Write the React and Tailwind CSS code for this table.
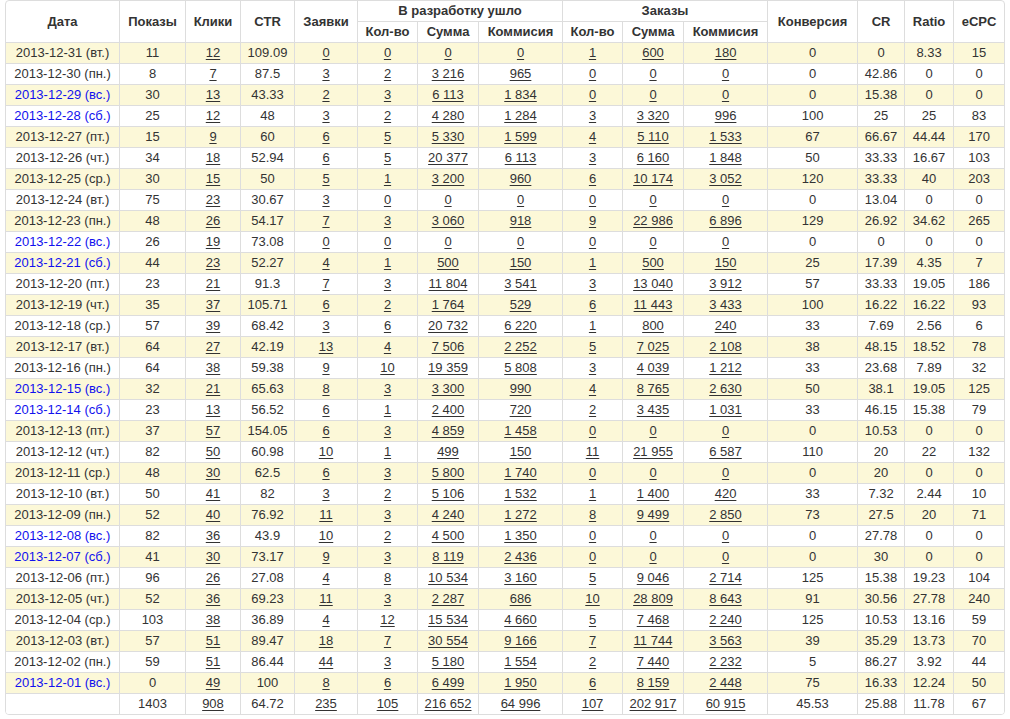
import React from "react";

const raw = `2013-12-31 (вт.)|11|12|109.09|0|0|0|0|1|600|180|0|0|8.33|15
2013-12-30 (пн.)|8|7|87.5|3|2|3 216|965|0|0|0|0|42.86|0|0
2013-12-29 (вс.)|30|13|43.33|2|3|6 113|1 834|0|0|0|0|15.38|0|0
2013-12-28 (сб.)|25|12|48|3|2|4 280|1 284|3|3 320|996|100|25|25|83
2013-12-27 (пт.)|15|9|60|6|5|5 330|1 599|4|5 110|1 533|67|66.67|44.44|170
2013-12-26 (чт.)|34|18|52.94|6|5|20 377|6 113|3|6 160|1 848|50|33.33|16.67|103
2013-12-25 (ср.)|30|15|50|5|1|3 200|960|6|10 174|3 052|120|33.33|40|203
2013-12-24 (вт.)|75|23|30.67|3|0|0|0|0|0|0|0|13.04|0|0
2013-12-23 (пн.)|48|26|54.17|7|3|3 060|918|9|22 986|6 896|129|26.92|34.62|265
2013-12-22 (вс.)|26|19|73.08|0|0|0|0|0|0|0|0|0|0|0
2013-12-21 (сб.)|44|23|52.27|4|1|500|150|1|500|150|25|17.39|4.35|7
2013-12-20 (пт.)|23|21|91.3|7|3|11 804|3 541|3|13 040|3 912|57|33.33|19.05|186
2013-12-19 (чт.)|35|37|105.71|6|2|1 764|529|6|11 443|3 433|100|16.22|16.22|93
2013-12-18 (ср.)|57|39|68.42|3|6|20 732|6 220|1|800|240|33|7.69|2.56|6
2013-12-17 (вт.)|64|27|42.19|13|4|7 506|2 252|5|7 025|2 108|38|48.15|18.52|78
2013-12-16 (пн.)|64|38|59.38|9|10|19 359|5 808|3|4 039|1 212|33|23.68|7.89|32
2013-12-15 (вс.)|32|21|65.63|8|3|3 300|990|4|8 765|2 630|50|38.1|19.05|125
2013-12-14 (сб.)|23|13|56.52|6|1|2 400|720|2|3 435|1 031|33|46.15|15.38|79
2013-12-13 (пт.)|37|57|154.05|6|3|4 859|1 458|0|0|0|0|10.53|0|0
2013-12-12 (чт.)|82|50|60.98|10|1|499|150|11|21 955|6 587|110|20|22|132
2013-12-11 (ср.)|48|30|62.5|6|3|5 800|1 740|0|0|0|0|20|0|0
2013-12-10 (вт.)|50|41|82|3|2|5 106|1 532|1|1 400|420|33|7.32|2.44|10
2013-12-09 (пн.)|52|40|76.92|11|3|4 240|1 272|8|9 499|2 850|73|27.5|20|71
2013-12-08 (вс.)|82|36|43.9|10|2|4 500|1 350|0|0|0|0|27.78|0|0
2013-12-07 (сб.)|41|30|73.17|9|3|8 119|2 436|0|0|0|0|30|0|0
2013-12-06 (пт.)|96|26|27.08|4|8|10 534|3 160|5|9 046|2 714|125|15.38|19.23|104
2013-12-05 (чт.)|52|36|69.23|11|3|2 287|686|10|28 809|8 643|91|30.56|27.78|240
2013-12-04 (ср.)|103|38|36.89|4|12|15 534|4 660|5|7 468|2 240|125|10.53|13.16|59
2013-12-03 (вт.)|57|51|89.47|18|7|30 554|9 166|7|11 744|3 563|39|35.29|13.73|70
2013-12-02 (пн.)|59|51|86.44|44|3|5 180|1 554|2|7 440|2 232|5|86.27|3.92|44
2013-12-01 (вс.)|0|49|100|8|6|6 499|1 950|6|8 159|2 448|75|16.33|12.24|50`;

const rows = raw.split("\n").map((l) => l.split("|"));
const total = ["", "1403", "908", "64.72", "235", "105", "216 652", "64 996", "107", "202 917", "60 915", "45.53", "25.88", "11.78", "67"];
const linkCols = new Set([2, 4, 5, 6, 7, 8, 9, 10]);
const widths = [114, 66, 55, 54, 63, 60, 61, 84, 60, 61, 84, 90, 47, 49, 51];

const th = "border border-[#dddddd] font-bold text-center align-middle p-0 leading-[20px]";
const td = "border border-[#dddddd] text-center align-middle p-0 leading-[20px] h-[21px] whitespace-nowrap";

function Cell({ v, i, blue }) {
  if (i === 0) {
    return <td className={td + (blue ? " text-[#1111ee]" : "")}>{v}</td>;
  }
  if (linkCols.has(i)) {
    return (
      <td className={td}>
        <span className="underline underline-offset-[2px]">{v}</span>
      </td>
    );
  }
  return <td className={td}>{v}</td>;
}

export default function App() {
  return (
    <div
      className="bg-white w-[1010px] h-[719px] pl-[5px] text-[#333333] text-[13px]"
      style={{ fontFamily: '"Liberation Sans", Arial, sans-serif' }}
    >
      <div className="w-[1000px] border border-[#dddddd] rounded-[4px] overflow-hidden">
        <table className="border-collapse table-fixed w-[1000px] -m-px">
          <colgroup>
            {widths.map((w, i) => (
              <col key={i} style={{ width: w }} />
            ))}
          </colgroup>
          <thead>
            <tr className="h-[21px]">
              <th rowSpan={2} className={th}>Дата</th>
              <th rowSpan={2} className={th}>Показы</th>
              <th rowSpan={2} className={th}>Клики</th>
              <th rowSpan={2} className={th}>CTR</th>
              <th rowSpan={2} className={th}>Заявки</th>
              <th colSpan={3} className={th}>В разработку ушло</th>
              <th colSpan={3} className={th}>Заказы</th>
              <th rowSpan={2} className={th}>Конверсия</th>
              <th rowSpan={2} className={th}>CR</th>
              <th rowSpan={2} className={th}>Ratio</th>
              <th rowSpan={2} className={th}>eCPC</th>
            </tr>
            <tr className="h-[21px]">
              <th className={th}>Кол-во</th>
              <th className={th}>Сумма</th>
              <th className={th}>Коммисия</th>
              <th className={th}>Кол-во</th>
              <th className={th}>Сумма</th>
              <th className={th}>Коммисия</th>
            </tr>
          </thead>
          <tbody>
            {rows.map((r, ri) => {
              const blue = r[0].includes("(вс.)") || r[0].includes("(сб.)");
              return (
                <tr key={ri} className={ri % 2 === 0 ? "bg-[#fcf8d8]" : "bg-white"}>
                  {r.map((v, i) => (
                    <Cell key={i} v={v} i={i} blue={blue} />
                  ))}
                </tr>
              );
            })}
            <tr className="bg-white">
              {total.map((v, i) => (
                <Cell key={i} v={v} i={i} blue={false} />
              ))}
            </tr>
          </tbody>
        </table>
      </div>
    </div>
  );
}
